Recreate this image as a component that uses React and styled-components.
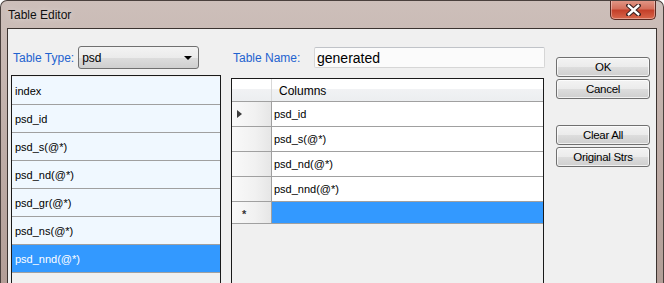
import React from 'react'
import styled, { createGlobalStyle } from 'styled-components'

const GlobalStyle = createGlobalStyle`
  html, body {
    margin: 0;
    padding: 0;
    background: #ffffff;
  }
  body {
    font-family: "Liberation Sans", Arial, sans-serif;
    color: #000;
  }
`

const Frame = styled.div`
  width: 664px;
  height: 283px;
  box-sizing: border-box;
  overflow: hidden;
  border: 1px solid #4a403d;
  border-bottom: none;
  border-radius: 7px 7px 0 0;
  padding: 0 6px;
  display: flex;
  flex-direction: column;
  background: linear-gradient(180deg, #cdbfba 0%, #c2b1ab 40%, #b39e97 100%);
`

const TitleBar = styled.div`
  height: 27px;
  flex: none;
  display: flex;
  align-items: flex-start;
  justify-content: space-between;
`

const Title = styled.div`
  font-size: 12px;
  line-height: 15px;
  padding: 7px 0 0 1px;
  color: #101010;
  text-shadow: 0 0 6px rgba(255, 255, 255, 0.6);
`

const CloseButton = styled.div`
  width: 46px;
  height: 20px;
  margin: -1px 1px 0 0;
  box-sizing: border-box;
  border: 1px solid #5a2a22;
  border-top: none;
  border-radius: 0 0 5px 5px;
  background: linear-gradient(180deg, #e29a8a 0%, #d5705c 45%, #c4402a 55%, #d8674c 100%);
  box-shadow: inset 0 0 0 1px rgba(255, 255, 255, 0.35);
  display: flex;
  align-items: center;
  justify-content: center;
`

const Client = styled.div`
  flex: 1;
  border: 1px solid #3b3330;
  border-bottom: none;
  background: #f0f0f0;
  display: flex;
  align-items: stretch;
  padding-left: 3px;
  min-height: 0;
`

const LeftPane = styled.div`
  width: 210px;
  padding-top: 17px;
  display: flex;
  flex-direction: column;
`

const FieldRow = styled.div`
  height: ${p => p.$h}px;
  display: flex;
  align-items: center;
  padding-left: 2px;
  flex: none;
`

const Label = styled.span`
  font-size: 12px;
  color: #1f63cf;
  margin-right: ${p => p.$gap || 0}px;
`

const Combo = styled.div`
  width: 121px;
  height: 23px;
  box-sizing: border-box;
  border: 1px solid #707070;
  border-radius: 3px;
  background: linear-gradient(180deg, #f3f3f3 0%, #ebebeb 50%, #dddddd 51%, #cfcfcf 100%);
  display: flex;
  align-items: center;
  justify-content: space-between;
  padding: 0 6px 0 3px;
  font-size: 12px;
`

const ComboArrow = styled.span`
  width: 0;
  height: 0;
  border-left: 4px solid transparent;
  border-right: 4px solid transparent;
  border-top: 4px solid #000;
`

const List = styled.div`
  margin-top: 6px;
  flex: 1;
  border: 1px solid #1a1a1a;
  border-bottom: none;
  padding-top: 1px;
  background: #f0f0f0;
  display: flex;
  flex-direction: column;
`

const ListRow = styled.div`
  height: 28px;
  box-sizing: border-box;
  border-bottom: 1px solid #a0a0a0;
  background: ${p => (p.$selected ? '#3399ff' : '#f0f8ff')};
  color: ${p => (p.$selected ? '#ffffff' : '#000000')};
  font-size: 11px;
  display: flex;
  align-items: center;
  padding-left: 3px;
  flex: none;
`

const MiddlePane = styled.div`
  width: 314px;
  margin-left: 10px;
  padding-top: 18px;
  display: flex;
  flex-direction: column;
`

const TextBox = styled.div`
  margin-left: auto;
  width: 231px;
  height: 21px;
  box-sizing: border-box;
  border: 1px solid #d6d6d6;
  border-top-color: #c0c3c8;
  border-radius: 2px;
  background: #fbfbfb;
  font-size: 14px;
  display: flex;
  align-items: center;
  padding-left: 2px;
`

const Grid = styled.div`
  margin-top: 10px;
  width: 313px;
  box-sizing: border-box;
  flex: 1;
  border: 1px solid #1a1a1a;
  border-bottom: none;
  background: #f0f0f0;
  display: flex;
  flex-direction: column;
`

const GridRow = styled.div`
  display: flex;
  height: ${p => p.$h}px;
  box-sizing: border-box;
  border-bottom: 1px solid #a0a0a0;
  flex: none;
`

const HeaderCorner = styled.div`
  width: 39px;
  border-right: 1px solid #d8d8d8;
  background: linear-gradient(180deg, #ffffff 0%, #ffffff 45%, #f1f2f4 46%, #eceef0 100%);
`

const HeaderCell = styled.div`
  flex: 1;
  font-size: 12px;
  display: flex;
  align-items: center;
  padding: 2px 0 0 7px;
  background: linear-gradient(180deg, #ffffff 0%, #ffffff 45%, #f1f2f4 46%, #eceef0 100%);
`

const RowHeader = styled.div`
  width: 34px;
  border-right: 1px solid #a0a0a0;
  background: linear-gradient(90deg, #f9f9f9 0%, #f1f1f1 60%, #e6e6e6 100%);
  display: flex;
  align-items: center;
  padding-left: 5px;
  font-size: 11px;
  color: #333;
`

const Cell = styled.div`
  flex: 1;
  background: ${p => (p.$selected ? '#3399ff' : '#ffffff')};
  font-size: 11px;
  display: flex;
  align-items: center;
  padding-left: 2px;
`

const Pointer = styled.span`
  width: 0;
  height: 0;
  border-top: 4px solid transparent;
  border-bottom: 4px solid transparent;
  border-left: 5px solid #3c3c3c;
`

const Star = styled.span`
  font-size: 11px;
  font-weight: bold;
  color: #333;
  margin-left: 5px;
  margin-top: 3px;
`

const RightPane = styled.div`
  width: 94px;
  margin-left: 11px;
  padding-top: 28px;
  display: flex;
  flex-direction: column;
  gap: 2px;
`

const Button = styled.div`
  height: 20px;
  box-sizing: border-box;
  border: 1px solid #707070;
  border-radius: 3px;
  background: linear-gradient(180deg, #f3f3f3 0%, #ebebeb 50%, #dddddd 51%, #cfcfcf 100%);
  box-shadow: inset 0 0 0 1px rgba(255, 255, 255, 0.7);
  font-size: 11.5px;
  letter-spacing: -0.3px;
  display: flex;
  align-items: center;
  justify-content: center;
  margin-top: ${p => p.$space || 0}px;
`

const CloseIcon = () => (
  <svg width="15" height="12" viewBox="0 0 15 12">
    <path d="M2.5 1.5 L12.5 10.5 M12.5 1.5 L2.5 10.5" stroke="#3a2020" strokeWidth="4.5" strokeLinecap="square" />
    <path d="M2.8 1.8 L12.2 10.2 M12.2 1.8 L2.8 10.2" stroke="#ffffff" strokeWidth="2.4" strokeLinecap="square" />
  </svg>
)

const listItems = ['index', 'psd_id', 'psd_s(@*)', 'psd_nd(@*)', 'psd_gr(@*)', 'psd_ns(@*)', 'psd_nnd(@*)']
const columns = ['psd_id', 'psd_s(@*)', 'psd_nd(@*)', 'psd_nnd(@*)']

export default function App() {
  return (
    <>
      <GlobalStyle />
      <Frame>
        <TitleBar>
          <Title>Table Editor</Title>
          <CloseButton><CloseIcon /></CloseButton>
        </TitleBar>
        <Client>
          <LeftPane>
            <FieldRow $h={23}>
              <Label $gap={4}>Table Type:</Label>
              <Combo>
                <span>psd</span>
                <ComboArrow />
              </Combo>
            </FieldRow>
            <List>
              {listItems.map((item, i) => (
                <ListRow key={item} $selected={i === listItems.length - 1}>{item}</ListRow>
              ))}
            </List>
          </LeftPane>

          <MiddlePane>
            <FieldRow $h={21}>
              <Label>Table Name:</Label>
              <TextBox>generated</TextBox>
            </FieldRow>
            <Grid>
              <GridRow $h={23}>
                <HeaderCorner />
                <HeaderCell>Columns</HeaderCell>
              </GridRow>
              {columns.map((col, i) => (
                <GridRow key={col} $h={25}>
                  <RowHeader>{i === 0 && <Pointer />}</RowHeader>
                  <Cell>{col}</Cell>
                </GridRow>
              ))}
              <GridRow $h={22}>
                <RowHeader><Star>*</Star></RowHeader>
                <Cell $selected />
              </GridRow>
            </Grid>
          </MiddlePane>

          <RightPane>
            <Button>OK</Button>
            <Button>Cancel</Button>
            <Button $space={24}>Clear All</Button>
            <Button>Original Strs</Button>
          </RightPane>
        </Client>
      </Frame>
    </>
  )
}
